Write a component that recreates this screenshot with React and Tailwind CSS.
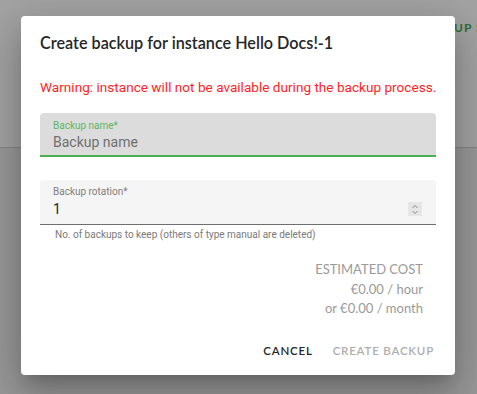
export default function App() {
  return (
    <div className="relative h-[394px] w-[477px] overflow-hidden bg-[#f0f0f0] font-['Roboto',sans-serif]">
      {/* page behind the dialog */}
      <div className="h-[148px] border-b border-[#d0d0d0] bg-white">
        <div className="pl-[418px] pt-[19px] whitespace-nowrap text-[12px] font-bold tracking-[1px] text-[#4caf50] font-['Lato',sans-serif]">
          BACKUP SETTINGS
        </div>
      </div>

      {/* overlay */}
      <div className="absolute inset-0 bg-black/[0.36]" />

      {/* dialog */}
      <div className="absolute left-[21px] top-[16px] flex h-[359px] w-[434px] flex-col rounded-[4px] bg-white px-[19px] shadow-[0_11px_15px_-7px_rgba(0,0,0,0.2),0_24px_38px_3px_rgba(0,0,0,0.14),0_9px_46px_8px_rgba(0,0,0,0.12)]">
        <h2 className="pt-[17px] text-[16.2px] leading-[20px] font-semibold text-[#262626] font-['Lato',sans-serif]">
          Create backup for instance Hello Docs!-1
        </h2>

        <p className="mt-[24px] whitespace-nowrap text-[13.6px] leading-[20px] text-[#ff1f1f]">
          Warning: instance will not be available during the backup process.
        </p>

        {/* backup name */}
        <div className="mt-[16px] h-[44px] w-[396px] rounded-t-[4px] border-b-2 border-[#4caf50] bg-[#dcdcdc] px-[13px]">
          <div className="pt-[7px] text-[10px] leading-[12px] text-[#5cb860]">Backup name*</div>
          <div className="pt-[2px] text-[14px] leading-[16px] text-[#707070]">Backup name</div>
        </div>

        {/* backup rotation */}
        <div className="mt-[23px] flex h-[45px] w-[396px] items-start rounded-t-[4px] border-b border-[#6f6f6f] bg-[#f5f5f5] px-[13px]">
          <div className="flex-1">
            <div className="pt-[6px] text-[10px] leading-[12px] text-[#808080]">Backup rotation*</div>
            <div className="pt-[3px] text-[14px] leading-[16px] text-[#222]">1</div>
          </div>
          <div className="mt-[22px] mr-[1px] flex h-[14px] w-[14px] items-center justify-center bg-[#e6e6e6]">
            <svg width="8" height="11" viewBox="0 0 8 11" fill="none" stroke="#8a8a8a" strokeWidth="1">
              <path d="M1.5 4 L4 1.5 L6.5 4" />
              <path d="M1.5 7 L4 9.5 L6.5 7" />
            </svg>
          </div>
        </div>
        <div className="pl-[15px] pt-[4px] text-[10px] leading-[12px] text-[#7a7a7a]">
          No. of backups to keep (others of type manual are deleted)
        </div>

        {/* cost */}
        <div className="mt-[19px] mr-[13px] flex flex-col items-end text-[13px] leading-[19.5px] text-[#9a9a9a] font-['Lato',sans-serif]">
          <div>ESTIMATED COST</div>
          <div>€0.00 / hour</div>
          <div>or €0.00 / month</div>
        </div>

        {/* actions */}
        <div className="mt-[23px] flex justify-end gap-[20px] pr-[2px] text-[11.5px] font-semibold tracking-[0.8px] font-['Lato',sans-serif]">
          <button className="text-[#262626]">CANCEL</button>
          <button className="text-[#adadad]">CREATE BACKUP</button>
        </div>
      </div>
    </div>
  );
}
